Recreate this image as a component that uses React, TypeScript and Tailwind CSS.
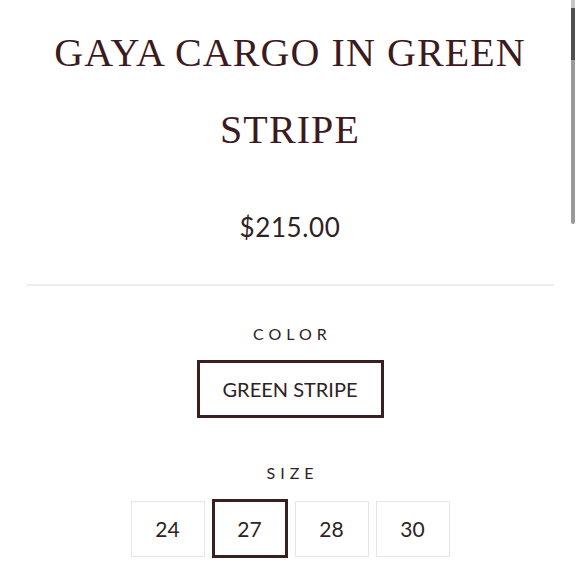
import React from "react";

const sizes = ["24", "27", "28", "30"];

export default function App() {
  const selected = "27";

  return (
    <div className="relative min-h-[580px] w-[580px] bg-white overflow-hidden">
      {/* fake scrollbar on the right edge */}
      <div className="absolute right-[5px] top-0 w-[4px] h-[224px] bg-[#9a9a9a] rounded-b-sm">
        <div className="h-[8px] bg-[#c4c4c4]" />
        <div className="h-[52px] bg-[#505050]" />
      </div>

      <div className="flex flex-col items-center px-[24px] pt-[14px]">
        <h1 className="text-center font-['Liberation_Serif',serif] text-[40px] leading-[77px] tracking-[1.1px] text-[#3d1a1d] font-normal">
          GAYA CARGO IN GREEN STRIPE
        </h1>

        <p className="mt-[46px] font-['Lato',sans-serif] text-[26px] leading-[26px] tracking-[0.6px] text-[#2e2224]">
          $215.00
        </p>

        <div className="mt-[44px] h-[2px] w-[527px] bg-[#ececec]" />

        <p className="mt-[40px] pl-[5px] font-['Lato',sans-serif] text-[16px] leading-[16px] tracking-[5px] text-[#2e2224]">
          COLOR
        </p>

        <button className="mt-[18px] flex h-[58px] w-[187px] items-center justify-center border-[3px] border-[#3a1f21] font-['Lato',sans-serif] text-[20px] text-[#2e2224]">
          GREEN STRIPE
        </button>

        <p className="mt-[47px] pl-[5px] font-['Lato',sans-serif] text-[16px] leading-[16px] tracking-[5px] text-[#2e2224]">
          SIZE
        </p>

        <div className="mt-[18px] flex items-center gap-[7px]">
          {sizes.map((s) =>
            s === selected ? (
              <div
                key={s}
                className="flex h-[59px] w-[76px] items-center justify-center border-[3px] border-[#3a1f21] font-['Lato',sans-serif] text-[21px] text-[#2e2224]"
              >
                {s}
              </div>
            ) : (
              <div
                key={s}
                className="flex h-[56px] w-[74px] items-center justify-center border border-[#e6e6e6] font-['Lato',sans-serif] text-[21px] text-[#2e2224]"
              >
                {s}
              </div>
            )
          )}
        </div>
      </div>
    </div>
  );
}
